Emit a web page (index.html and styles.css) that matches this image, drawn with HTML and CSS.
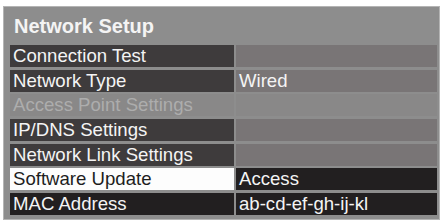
FILE: index.html
```html
<!DOCTYPE html>
<html lang="en">
    <head>
        <meta charset="UTF-8">
        <meta name="viewport" content="width=device-width, initial-scale=1.0">
        <title>Network Setup</title>
        <link rel="stylesheet" href="styles.css">
    </head>
    <body>
        <div class="panel">
            <div class="panel-title">Network Setup</div>
            <div class="menu">
                <div class="item">
                    <div class="label">Connection Test</div>
                    <div class="value"></div>
                </div>
                <div class="item">
                    <div class="label">Network Type</div>
                    <div class="value">Wired</div>
                </div>
                <div class="item disabled">
                    <div class="label">Access Point Settings</div>
                    <div class="value"></div>
                </div>
                <div class="item">
                    <div class="label">IP/DNS Settings</div>
                    <div class="value"></div>
                </div>
                <div class="item">
                    <div class="label">Network Link Settings</div>
                    <div class="value"></div>
                </div>
                <div class="item selected">
                    <div class="label">Software Update</div>
                    <div class="value">Access</div>
                </div>
                <div class="item info">
                    <div class="label">MAC Address</div>
                    <div class="value">ab-cd-ef-gh-ij-kl</div>
                </div>
            </div>
        </div>
    </body>
</html>
```

FILE: styles.css
```css
*,
*::before,
*::after {
    box-sizing: border-box;
}

body {
    margin: 0;
    background-color: #fff;
    font-family: "Liberation Sans", Arial, sans-serif;
    overflow: hidden;
}

.panel {
    margin: 6px 3px 0 3px;
    height: 214px;
    background-color: #8d8d8d;
    border: 1px solid #b4b4b4;
    padding: 0 2px 0 6px;
}

.panel-title {
    height: 38px;
    padding: 6px 0 0 4px;
    color: #f4f4f4;
    font-size: 20px;
    font-weight: bold;
    line-height: 26px;
}

.menu {
    display: grid;
    grid-template-rows: repeat(7, 22px);
    row-gap: 2.67px;
}

.item {
    display: grid;
    grid-template-columns: 224px 1fr;
    column-gap: 2px;
    font-size: 18.6px;
    line-height: 22px;
    color: #f4f4f4;
}

.label,
.value {
    padding-left: 3px;
    white-space: nowrap;
}

.label {
    background-color: #3e3b3c;
}

.value {
    background-color: #797576;
}

.disabled .label,
.disabled .value {
    background-color: #898888;
    color: #adadad;
}

.selected .label {
    background-color: #fdfdfd;
    color: #1e1e1e;
}

.selected .value,
.info .label,
.info .value {
    background-color: #221f20;
}
```
